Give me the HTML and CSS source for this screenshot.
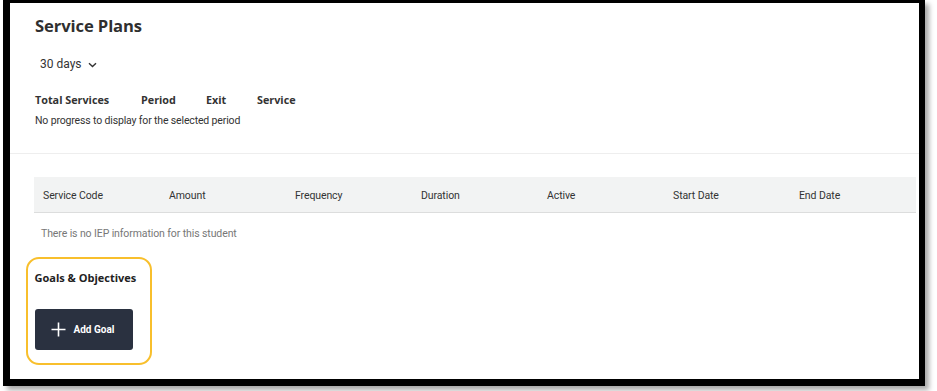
FILE: index.html
```html
<!DOCTYPE html>
<html lang="en">
<head>
<meta charset="utf-8">
<title>Service Plans</title>
<link rel="stylesheet" href="styles.css">
</head>
<body>
<div class="frame">
  <section class="top">
    <h1 class="title">Service Plans</h1>
    <div class="period-select">
      <span>30 days</span>
      <svg class="chev" width="9" height="6" viewBox="0 0 9 6"><path d="M1 1.2 L4.5 4.6 L8 1.2" fill="none" stroke="#333" stroke-width="1.4"/></svg>
    </div>
    <div class="stats">
      <span class="stat s1">Total Services</span>
      <span class="stat s2">Period</span>
      <span class="stat s3">Exit</span>
      <span class="stat s4">Service</span>
    </div>
    <p class="empty">No progress to display for the selected period</p>
  </section>
  <section class="plans">
    <div class="thead">
      <div class="th">Service Code</div>
      <div class="th">Amount</div>
      <div class="th">Frequency</div>
      <div class="th">Duration</div>
      <div class="th">Active</div>
      <div class="th">Start Date</div>
      <div class="th">End Date</div>
    </div>
    <p class="no-iep">There is no IEP information for this student</p>
    <div class="goals">
      <h2 class="goals-title">Goals &amp; Objectives</h2>
      <button class="add-btn">
        <svg width="15" height="15" viewBox="0 0 15 15"><path d="M7.5 0.5 V14.5 M0.5 7.5 H14.5" stroke="#fff" stroke-width="1.6"/></svg>
        <span>Add Goal</span>
      </button>
    </div>
  </section>
</div>
</body>
</html>
```

FILE: styles.css
```css
* { box-sizing: border-box; }
html, body { margin: 0; padding: 0; background: #fff; }
body {
  width: 937px;
  height: 391px;
  overflow: hidden;
  font-family: "Roboto", "Liberation Sans", sans-serif;
  color: #333;
}
.frame {
  margin-left: 3px;
  width: 922px;
  height: 386px;
  border-style: solid;
  border-color: #000;
  border-width: 3px 6px 7px 7px;
  background: #fff;
  box-shadow: 4px 4px 5px rgba(0,0,0,0.35);
  display: flex;
  flex-direction: column;
}
.top {
  padding: 0 0 0 25px;
  border-bottom: 1px solid #eeeeee;
  height: 151px;
}
.title {
  margin: 12px 0 0;
  font-family: "Open Sans", sans-serif;
  font-size: 16.6px;
  font-weight: 700;
  line-height: 22px;
  color: #2f2f2f;
  letter-spacing: -0.1px;
}
.period-select {
  margin: 19px 0 0 5px;
  display: flex;
  align-items: center;
  gap: 6px;
  font-size: 12px;
  line-height: 16px;
  color: #333;
}
.chev { margin-top: 1px; }
.stats {
  margin-top: 21px;
  display: flex;
  font-family: "Open Sans", sans-serif;
  font-size: 10.8px;
  font-weight: 700;
  line-height: 14px;
  color: #333;
}
.stat.s1 { width: 106px; }
.stat.s2 { width: 65px; }
.stat.s3 { width: 51px; }
.empty {
  margin: 7px 0 0;
  font-size: 10.5px;
  line-height: 14px;
  color: #333;
  letter-spacing: -0.15px;
}
.plans {
  padding: 23px 0 0 24px;
  flex: 1;
}
.thead {
  width: 882px;
  height: 36px;
  background: #f2f3f3;
  border-bottom: 1px solid #dcdddd;
  display: grid;
  grid-template-columns: repeat(7, 126px);
  align-items: center;
  padding-top: 2px;
}
.th {
  padding-left: 9px;
  font-size: 10.5px;
  color: #333;
  letter-spacing: -0.1px;
}
.no-iep {
  margin: 14px 0 0 7px;
  font-size: 10.5px;
  line-height: 14px;
  color: #777;
  letter-spacing: -0.1px;
}
.goals {
  margin: 16px 0 0 -8px;
  width: 126px;
  height: 108px;
  border: 2.5px solid #f8bf2c;
  border-radius: 13px;
  padding: 12px 0 0 6.5px;
}
.goals-title {
  margin: 0;
  font-family: "Open Sans", sans-serif;
  font-size: 11px;
  font-weight: 700;
  line-height: 14px;
  color: #222;
  letter-spacing: 0;
}
.add-btn {
  margin-top: 24px;
  width: 98px;
  height: 41px;
  border: 0;
  border-radius: 3px;
  background: #2a3140;
  color: #fff;
  display: flex;
  align-items: center;
  gap: 8px;
  padding: 0 0 0 16px;
  font-family: "Roboto", sans-serif;
  font-size: 10px;
  font-weight: 700;
}
```
